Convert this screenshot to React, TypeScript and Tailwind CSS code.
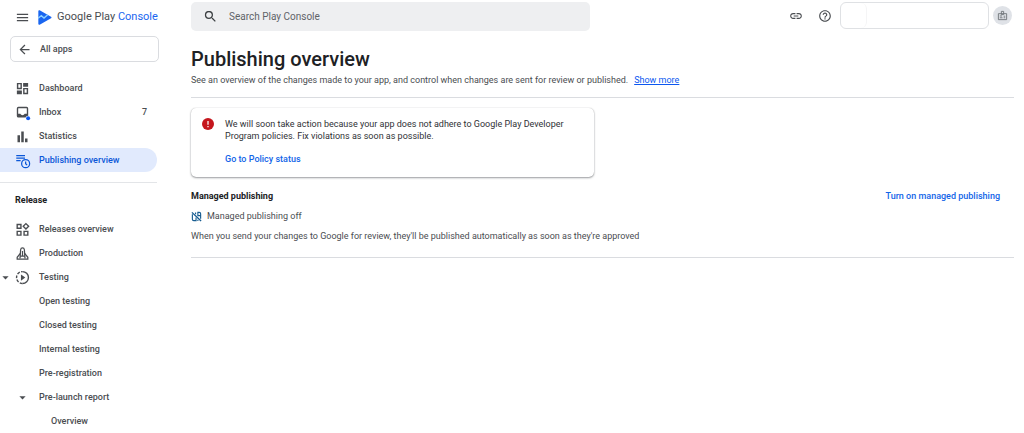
import type { ReactNode } from "react";
import {
  MdArrowBack,
  MdArrowDropDown,
  MdHelpOutline,
  MdLink,
  MdMenu,
  MdSearch,
} from "react-icons/md";

const DashboardIcon = () => (
  <svg viewBox="0 0 24 24" className="size-[15px]" fill="currentColor">
    <path
      fillRule="evenodd"
      d="M3 3h8v10H3zM5.300 5.300v5.400h3.400V5.300zM13 11h8v10h-8zM15.300 13.300v5.400h3.400v-5.400z"
    />
    <path d="M13 3h8v6h-8zM3 15h8v6H3z" />
  </svg>
);

const InboxIcon = () => (
  <svg viewBox="0 0 24 24" className="size-[15px] overflow-visible">
    <rect x="4" y="4" width="16" height="15" rx="1.5" fill="none" stroke="currentColor" strokeWidth="2.2" />
    <path d="M4 14h4.5c.7 1.5 2 2.3 3.5 2.3s2.8-.8 3.500-2.3H20v5H4z" fill="currentColor" />
    <circle cx="21" cy="21" r="4" fill="#fff" />
    <circle cx="21" cy="21" r="3.2" fill="#0b57f0" />
  </svg>
);

const StatisticsIcon = () => (
  <svg viewBox="0 0 24 24" className="size-[15px]" fill="currentColor">
    <path d="M4 10h4v11H4zM10 4h4v17h-4zM16 15h4v6h-4z" />
  </svg>
);

const PublishingIcon = () => (
  <svg viewBox="0 0 24 24" className="size-[15px] overflow-visible" fill="none" stroke="currentColor" strokeWidth="2">
    <path d="M2 4h14M2 8h14M2 12h7" />
    <circle cx="17" cy="17" r="6.4" />
    <path d="M17 13.5V17l2.4 2.4" />
  </svg>
);

const ReleasesIcon = () => (
  <svg viewBox="0 0 24 24" className="size-[15px]" fill="none" stroke="currentColor" strokeWidth="2.200">
    <path d="M3.500 4h6v6h-6zM3.500 15h6v6h-6zM14.500 15h6v6h-6zM17.500 2.600l4.300 4.300-4.300 4.300-4.300-4.300z" />
  </svg>
);

const ProductionIcon = () => (
  <svg viewBox="0 0 24 24" className="size-[15px]" fill="none" stroke="currentColor" strokeWidth="2">
    <path d="M8 20 9 6c.3-2 1.500-3 3-3s2.700 1 3 3l1 14" />
    <path d="M8.500 12 3.500 18v3h17v-3l-5-6M12 8v8M8.200 16h7.600" />
  </svg>
);

const TestingIcon = () => (
  <svg viewBox="0 0 24 24" className="size-[15px]" fill="none" stroke="currentColor" strokeWidth="2.200">
    <path d="M12 2.500a9.500 9.500 0 0 1 0 19" />
    <path d="M12 21.500a9.500 9.500 0 0 1 0-19" strokeDasharray="4.500 2.200" />
    <path d="M9.500 7v10l7-5z" fill="currentColor" stroke="none" />
  </svg>
);

const PlayLogo = () => (
  <svg viewBox="0 0 42 45" className="h-[15px] w-[14px]">
    <path d="M1 3c0-2 2-3 4-2l34 19c2 1 2 4 0 5L5 44c-2 1-4 0-4-2z" fill="#1a66f0" />
    <path d="M0 25l10-8 8 7 11-10" fill="none" stroke="#8fd3ff" strokeWidth="4" />
  </svg>
);

const SyncOffIcon = () => (
  <svg viewBox="0 0 24 24" className="size-[11px]" fill="none" stroke="#185d91" strokeWidth="2.500">
    <path d="M2 3l20 19" strokeWidth="3" />
    <path d="M3 7v11c0 1 1 3 3 3h5v-7M10 3v4M21 17V6c0-1-1-3-3-3h-3v7h5M15 19v3" />
  </svg>
);

const ErrorIcon = () => (
  <svg viewBox="0 0 24 24" className="size-3 shrink-0">
    <circle cx="12" cy="12" r="12" fill="#c5161d" />
    <path d="M12 6v7.500M12 16v2.500" stroke="#fff" strokeWidth="2.500" />
  </svg>
);

const BadgeIcon = () => (
  <svg viewBox="0 0 24 24" className="size-[11px]" fill="none" stroke="#70757a" strokeWidth="2">
    <path d="M3 8h18v13H3zM9.500 10V3h5v7zM6 17h6M6 13h5M14.500 13.500H18M14.500 17H18" />
  </svg>
);

type NavItem = {
  label: string;
  icon?: ReactNode;
  count?: number;
  active?: boolean;
  expanded?: boolean;
  nested?: boolean;
};

const mainItems: NavItem[] = [
  { label: "Dashboard", icon: <DashboardIcon /> },
  { label: "Inbox", icon: <InboxIcon />, count: 7 },
  { label: "Statistics", icon: <StatisticsIcon /> },
  { label: "Publishing overview", icon: <PublishingIcon />, active: true },
];

const releaseItems: NavItem[] = [
  { label: "Releases overview", icon: <ReleasesIcon /> },
  { label: "Production", icon: <ProductionIcon /> },
  { label: "Testing", icon: <TestingIcon />, expanded: true },
  { label: "Open testing" },
  { label: "Closed testing" },
  { label: "Internal testing" },
  { label: "Pre-registration" },
  { label: "Pre-launch report", expanded: true },
  { label: "Overview", nested: true },
];

function NavRow({ item }: { item: NavItem }) {
  const arrow = item.expanded && <MdArrowDropDown className="size-[15px] shrink-0" />;
  return (
    <li>
      <a
        href="#"
        aria-current={item.active ? "page" : undefined}
        className={`flex h-6 items-center rounded-r-full pr-2.5 ${
          item.active ? "bg-[#e1eafd] text-[#0b57d8]" : ""
        }`}
      >
        <span className="flex w-[15px] shrink-0 justify-center pr-1">
          {item.icon && arrow}
        </span>
        <span className="flex w-6 shrink-0">{item.icon ?? arrow}</span>
        <span className={item.nested ? "pl-3" : ""}>{item.label}</span>
        {item.count && <span className="ml-auto">{item.count}</span>}
      </a>
    </li>
  );
}

function Sidebar() {
  return (
    <aside className="w-[159px] shrink-0 text-[9px] font-medium text-[#4a4d51]">
      <div className="flex h-[34px] items-center pl-[15px]">
        <button type="button" aria-label="Menu">
          <MdMenu className="size-[15px]" />
        </button>
        <a
          href="#"
          className="flex items-center gap-[5px] pl-2 text-[11px] font-normal whitespace-nowrap text-[#4a4d51]"
        >
          <PlayLogo />
          <span>
            Google Play <span className="text-[#1a66f0]">Console</span>
          </span>
        </a>
      </div>
      <div className="pt-0.5 pl-2.5">
        <button
          type="button"
          className="flex h-[26px] w-full items-center gap-2 rounded-[5px] border border-[#dadce0] pl-1.5"
        >
          <MdArrowBack className="size-[15px]" />
          All apps
        </button>
      </div>
      <nav className="pt-[14px] pr-0.5">
        <ul>
          {mainItems.map((item) => (
            <NavRow key={item.label} item={item} />
          ))}
        </ul>
        <hr className="mt-2.5 border-[#e3e5e8]" />
        <h2 className="pt-3 pb-[11px] pl-[15px] leading-[11px] font-bold text-[#202124]">Release</h2>
        <ul>
          {releaseItems.map((item) => (
            <NavRow key={item.label} item={item} />
          ))}
        </ul>
      </nav>
    </aside>
  );
}

function TopBar() {
  return (
    <header className="flex items-start justify-between pt-0.5 pr-3">
      <label className="flex h-[29px] w-[399px] items-center gap-[11px] rounded-[5px] bg-[#eeeff1] pl-3 text-[#5f6368]">
        <MdSearch className="size-[15px] shrink-0 text-[#3c4043]" />
        <input
          type="search"
          aria-label="Search Play Console"
          placeholder="Search Play Console"
          className="w-full bg-transparent text-[10px] outline-none placeholder:text-[#5f6368]"
        />
      </label>
      <div className="flex items-center">
        <button type="button" aria-label="Copy link" className="mr-[15px]">
          <MdLink className="size-[14px] text-[#4a4d51]" />
        </button>
        <button type="button" aria-label="Help" className="mr-2">
          <MdHelpOutline className="size-[14px] text-[#4a4d51]" />
        </button>
        <button
          type="button"
          aria-label="Developer account"
          className="mr-1 h-[27px] w-[149px] rounded-[6px] border border-[#dfe1e4]"
        >
          <span className="block h-full w-[26px] rounded-[6px] border-r border-[#f5f5f6]" />
        </button>
        <button
          type="button"
          aria-label="Profile"
          className="flex size-[19px] items-center justify-center rounded-full bg-[#dfe2e7]"
        >
          <BadgeIcon />
        </button>
      </div>
    </header>
  );
}

export default function App() {
  return (
    <div className="flex bg-white font-['Roboto',sans-serif] text-[9px] leading-3 text-[#4a4d51]">
      <Sidebar />
      <div className="min-w-0 flex-1 pl-8">
        <TopBar />
        <main className="pr-2.5">
          <h1 className="pt-4 text-[20px] leading-6 font-medium text-[#202124]">
            Publishing overview
          </h1>
          <p className="pt-[3px]">
            See an overview of the changes made to your app, and control when changes are sent for
            review or published.
            <a href="#" className="ml-1.5 text-[#0b57f0] underline">
              Show more
            </a>
          </p>
          <hr className="mt-[11px] border-[#dadce0]" />

          <section className="mt-2.5 flex w-[403px] gap-[11px] rounded-[5px] px-[11px] pt-2.5 pb-3 shadow-[0_1px_2px_rgba(60,64,67,0.5),0_0_1px_rgba(60,64,67,0.3)]">
            <ErrorIcon />
            <div className="text-[#303236]">
              <p className="w-[340px]">
                We will soon take action because your app does not adhere to Google Play Developer
                Program policies. Fix violations as soon as possible.
              </p>
              <a href="#" className="mt-[11px] block font-medium text-[#1265e8]">
                Go to Policy status
              </a>
            </div>
          </section>

          <section className="pt-[13px]">
            <div className="flex items-center justify-between pr-[14px]">
              <h2 className="font-bold text-[#202124]">Managed publishing</h2>
              <button type="button" className="font-medium text-[#1265e8]">
                Turn on managed publishing
              </button>
            </div>
            <p className="flex items-center gap-[5px] pt-2">
              <SyncOffIcon />
              Managed publishing off
            </p>
            <p className="pt-2">
              When you send your changes to Google for review, they'll be published automatically as
              soon as they're approved
            </p>
            <hr className="mt-[15px] border-[#dadce0]" />
          </section>
        </main>
      </div>
    </div>
  );
}
